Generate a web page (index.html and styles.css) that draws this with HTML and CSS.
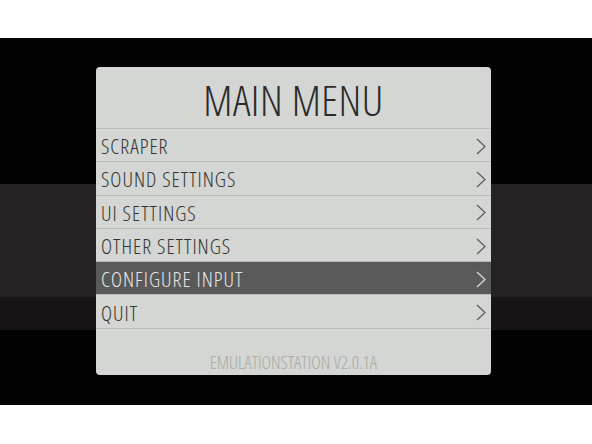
FILE: index.html
```html
<!DOCTYPE html>
<html lang="en">
<head>
<meta charset="UTF-8">
<title>EmulationStation</title>
<link rel="stylesheet" href="styles.css">
</head>
<body>
	<div class="Screen">
		<div class="MenuPanel">
			<div class="MenuTitle">MAIN MENU</div>
			<div class="MenuList">
				<div class="MenuRow"><span>SCRAPER</span><svg class="Arrow" viewBox="0 0 10 17"><polyline points="1,1 9,8.5 1,16"/></svg></div>
				<div class="MenuRow"><span>SOUND SETTINGS</span><svg class="Arrow" viewBox="0 0 10 17"><polyline points="1,1 9,8.5 1,16"/></svg></div>
				<div class="MenuRow"><span>UI SETTINGS</span><svg class="Arrow" viewBox="0 0 10 17"><polyline points="1,1 9,8.5 1,16"/></svg></div>
				<div class="MenuRow"><span>OTHER SETTINGS</span><svg class="Arrow" viewBox="0 0 10 17"><polyline points="1,1 9,8.5 1,16"/></svg></div>
				<div class="MenuRow MenuRowActive"><span>CONFIGURE INPUT</span><svg class="Arrow" viewBox="0 0 10 17"><polyline points="1,1 9,8.5 1,16"/></svg></div>
				<div class="MenuRow"><span>QUIT</span><svg class="Arrow" viewBox="0 0 10 17"><polyline points="1,1 9,8.5 1,16"/></svg></div>
			</div>
			<div class="MenuVersion">EMULATIONSTATION V2.0.1A</div>
		</div>
	</div>
</body>
</html>
```

FILE: styles.css
```css
body {
	margin: 0;
	background-color: #fff;
	font-family: "Open Sans", "DejaVu Sans Condensed", sans-serif;
	font-stretch: 75%;
	font-weight: 300;
}

/* tv picture: black with the lighter horizontal band behind the menu */
.Screen {
	margin-top: 38px;
	height: 367px;
	padding-top: 29px;
	box-sizing: border-box;
	background: linear-gradient(to bottom,
		#040304 0px, #040304 146px,
		#252223 146px, #252223 259px,
		#171516 259px, #171516 292px,
		#040304 292px);
}

.MenuPanel {
	margin-left: 96px;
	width: 395px;
	height: 308px;
	background-color: #d3d6d2;
	border-radius: 4px;
	display: flex;
	flex-direction: column;
}

.MenuTitle {
	height: 62px;
	line-height: 66px;
	text-align: center;
	font-size: 43px;
	letter-spacing: 0.5px;
	color: #2a2a2a;
	border-bottom: 1px solid #b9bcb8;
	box-sizing: border-box;
}

.MenuRow {
	height: 33.3px;
	display: flex;
	align-items: center;
	justify-content: space-between;
	padding: 2px 5px 0 5px;
	box-sizing: border-box;
	font-size: 21px;
	letter-spacing: 1px;
	color: #333;
	border-bottom: 1px solid #b9bcb8;
}

.MenuRowActive {
	background-color: #595959;
	color: #e6e6e6;
}

.Arrow {
	width: 10px;
	height: 17px;
	fill: none;
	stroke: #5a5a5a;
	stroke-width: 1.2;
}

.MenuRowActive .Arrow {
	stroke: #dcdcdc;
}

.MenuVersion {
	flex: 1;
	display: flex;
	align-items: center;
	justify-content: center;
	padding-top: 20px;
	font-size: 18px;
	color: #a7a9a6;
}
```
